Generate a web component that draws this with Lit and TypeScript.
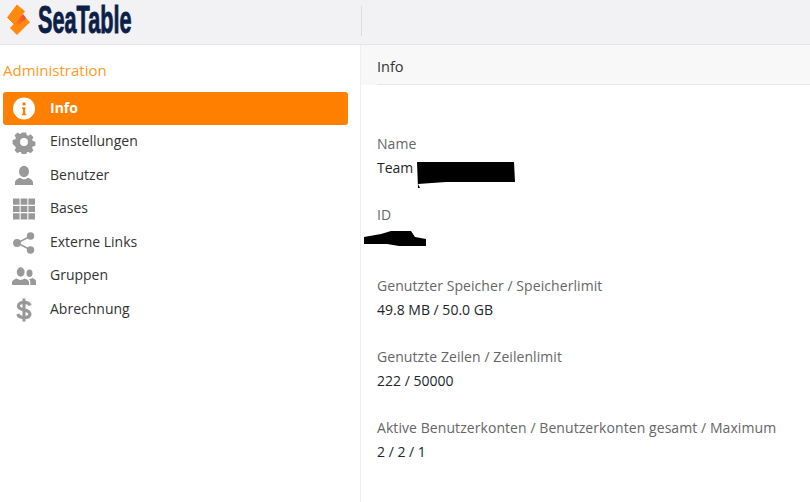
import { LitElement, html, css, svg } from "lit";
import { customElement } from "lit/decorators.js";

const icons: Record<string, unknown> = {
  info: svg`<svg width="24" height="24" viewBox="0 0 24 24"><circle cx="12" cy="11.500" r="11" fill="#fff"/><circle cx="12" cy="7" r="1.700" fill="#ff8000"/><path d="M10 10.300h3.200v6.400h1v1.500H9.900v-1.500h1v-4.900h-.9z" fill="#ff8000"/></svg>`,
  gear: svg`<svg width="24" height="24" viewBox="0 0 24 24"><path fill="#999" fill-rule="evenodd" d="M9.600 1h4.800l.7 3.100 1.700.7 2.700-1.700 3.400 3.400-1.700 2.700.7 1.700 3.100.7v4.800l-3.100.7-.7 1.700 1.700 2.700-3.400 3.400-2.700-1.700-1.700.7-.7 3.100H9.600l-.7-3.100-1.700-.7-2.700 1.700-3.400-3.400 1.700-2.700-.7-1.700L-1 14.400V9.600l3.100-.7.7-1.700-1.700-2.700 3.400-3.400 2.700 1.700 1.700-.7zM12 7.500a4.500 4.500 0 1 0 0 9 4.500 4.500 0 0 0 0-9z" transform="translate(1.500 1.500) scale(.875)"/></svg>`,
  user: svg`<svg width="24" height="24" viewBox="0 0 24 24"><ellipse cx="12" cy="7.500" rx="5" ry="5.800" fill="#999"/><path fill="#999" d="M3 21v-2.500c0-2.500 3.500-4.200 5.500-4.700 1 1 2.200 1.500 3.500 1.500s2.500-.5 3.500-1.500c2 .5 5.500 2.200 5.500 4.700V21z"/></svg>`,
  grid: svg`<svg width="24" height="24" viewBox="0 0 24 24"><path fill="#999" d="M1 1.500h6.600v6.200H1zM8.700 1.500h6.600v6.200H8.700zM16.400 1.500H23v6.200h-6.600zM1 8.900h6.600v6.200H1zM8.700 8.900h6.600v6.200H8.700zM16.400 8.900H23v6.200h-6.600zM1 16.300h6.600v6.200H1zM8.700 16.300h6.600v6.200H8.700zM16.400 16.300H23v6.200h-6.600z"/></svg>`,
  share: svg`<svg width="24" height="24" viewBox="0 0 24 24"><path d="M18 5.500 5 12l13 6.500" fill="none" stroke="#999" stroke-width="1.500"/><circle cx="18.500" cy="5" r="3.700" fill="#999"/><circle cx="5" cy="12" r="3.900" fill="#999"/><circle cx="18.500" cy="19" r="3.700" fill="#999"/></svg>`,
  group: svg`<svg width="24" height="24" viewBox="0 0 24 24"><ellipse cx="8.700" cy="8" rx="3.900" ry="4.700" fill="#999"/><ellipse cx="17.500" cy="9.300" rx="3" ry="3.700" fill="#999"/><path fill="#999" d="M0 21v-2.500c0-2 2.500-3.500 4.800-4 1 .9 2.400 1.400 3.900 1.400s2.900-.5 3.900-1.400c2.300.5 4.400 2 4.400 4V21z"/><path fill="#999" d="M18.300 21v-3c0-1.300-.7-2.400-1.600-3.200.3 0 .6.100.9.100 1 0 2-.3 2.600-.9 1.700.4 3.800 1.600 3.800 3.200V21z"/></svg>`,
  dollar: svg`<svg width="24" height="24" viewBox="0 0 24 24"><path fill="none" stroke="#999" stroke-width="3.300" d="M18 7.500c-.6-1.900-3-3.100-5.800-3.100-3.400 0-5.800 1.400-5.800 3.600 0 5 11.500 2.800 11.500 8 0 2.300-2.500 3.600-5.900 3.600-3.100 0-5.500-1.300-6.200-3.500"/><path fill="none" stroke="#999" stroke-width="3" d="M12 .5v23"/></svg>`,
};

const nav = [
  ["info", "Info"],
  ["gear", "Einstellungen"],
  ["user", "Benutzer"],
  ["grid", "Bases"],
  ["share", "Externe Links"],
  ["group", "Gruppen"],
  ["dollar", "Abrechnung"],
];

@customElement("app-root")
export class AppRoot extends LitElement {
  static styles = css`
    :host {
      display: block;
      width: 810px;
      height: 502px;
      overflow: hidden;
      background: #fff;
      font-family: "Open Sans", sans-serif;
      font-size: 14px;
      color: #212529;
    }
    .top {
      height: 44px;
      box-sizing: content-box;
      background: #f2f2f5;
      border-bottom: 1px solid #e4e4e6;
      display: flex;
    }
    .brand {
      width: 361px;
      flex: none;
      box-sizing: border-box;
      display: flex;
      align-items: flex-start;
      padding: 4px 0 0 6px;
      gap: 7px;
    }
    .wordmark {
      font-family: "Liberation Sans", sans-serif;
      font-weight: 700;
      font-size: 33px;
      line-height: 28px;
      margin-top: 3.6px;
      color: #0c1f47;
      display: inline-block;
      transform: scale(0.656, 1.186);
      transform-origin: 0 25.4px;
      white-space: nowrap;
      -webkit-text-stroke: 0.8px #0c1f47;
    }
    .divider {
      width: 1px;
      height: 30px;
      margin-top: 6px;
      background: #dcdcde;
    }
    .main {
      display: flex;
      height: 457px;
    }
    .side {
      width: 361px;
      flex: none;
      box-sizing: border-box;
      padding: 15px 12px 0 3px;
      border-right: 1px solid #eeeeee;
    }
    .side-title {
      color: #ff9a26;
      font-size: 15px;
      line-height: 21px;
      margin-bottom: 11px;
    }
    .item {
      display: flex;
      align-items: center;
      height: 33.5px;
      color: #333;
      font-size: 14px;
    }
    .item svg {
      display: block;
    }
    .ico {
      width: 24px;
      margin: 0 14px 0 9px;
      display: flex;
    }
    .txt {
      padding-bottom: 3px;
    }
    .on .txt {
      padding-bottom: 2px;
    }
    .item.on {
      height: 33px;
      margin-bottom: 0.5px;
      background: #ff8000;
      border-radius: 3px;
      color: #fff;
      font-weight: 700;
    }
    .content {
      flex: 1;
    }
    .head {
      height: 40px;
      background: #f8f8f8;
      box-sizing: border-box;
      padding-left: 16px;
    }
    .head div {
      height: 40px;
      box-sizing: border-box;
      border-bottom: 1px solid #e6e6e6;
      line-height: 44px;
      font-size: 14.5px;
      color: #333;
    }
    .body {
      padding: 49px 0 0 16px;
    }
    .field {
      height: 71px;
    }
    .label {
      color: #666;
      line-height: 20px;
      height: 24px;
      white-space: nowrap;
      letter-spacing: 0.07px;
    }
    .value {
      color: #212529;
      line-height: 20px;
      white-space: nowrap;
    }
    .redact-wrap {
      position: relative;
    }
    .blot {
      position: absolute;
      display: block;
    }
    .blot.a {
      left: 39px;
      top: 2px;
    }
    .blot.b {
      left: -14px;
      top: 1px;
    }
  `;

  render() {
    return html`
      <div class="top">
        <div class="brand">
          <svg width="25" height="32" viewBox="6 4 25 32">
            <defs>
              <linearGradient id="fold" x1="0" y1="1" x2="1" y2="0">
                <stop offset="0" stop-color="#ff8a0d" />
                <stop offset="1" stop-color="#f0403a" />
              </linearGradient>
            </defs>
            <path fill="#ff8a0d" stroke="#ff8a0d" stroke-linejoin="round" d="M17 5 24.500 11.500 14 24 7.500 17.500z" />
            <path fill="#ff8a0d" stroke="#ff8a0d" stroke-linejoin="round" d="M22 15.500 29.500 22 17 34.500 10.500 28z" />
            <path fill="url(#fold)" d="M15 23.500 23 14 26.500 18.500 16 27z" />
          </svg>
          <span class="wordmark">SeaTable</span>
        </div>
        <div class="divider"></div>
      </div>
      <div class="main">
        <div class="side">
          <div class="side-title">Administration</div>
          ${nav.map(
            ([i, t], n) => html`<div class="item ${n === 0 ? "on" : ""}">
              <span class="ico">${icons[i]}</span><span class="txt">${t}</span>
            </div>`
          )}
        </div>
        <div class="content">
          <div class="head"><div>Info</div></div>
          <div class="body">
            <div class="field">
              <div class="label">Name</div>
              <div class="value redact-wrap">
                Team
                <svg class="blot a" width="100" height="29" viewBox="0 0 100 29">
                  <path d="M1 2H98l1 20H30L2 24 4 28H2z" fill="#000" />
                </svg>
              </div>
            </div>
            <div class="field">
              <div class="label">ID</div>
              <div class="value redact-wrap">
                <svg class="blot b" width="64" height="20" viewBox="0 0 64 20">
                  <path d="M1 7 18 4 28 1 48 1 52 7 63 9V16H36L24 14 1 14z" fill="#000" />
                </svg>
              </div>
            </div>
            <div class="field">
              <div class="label">Genutzter Speicher / Speicherlimit</div>
              <div class="value">49.8 MB / 50.0 GB</div>
            </div>
            <div class="field">
              <div class="label">Genutzte Zeilen / Zeilenlimit</div>
              <div class="value">222 / 50000</div>
            </div>
            <div class="field">
              <div class="label">Aktive Benutzerkonten / Benutzerkonten gesamt / Maximum</div>
              <div class="value">2 / 2 / 1</div>
            </div>
          </div>
        </div>
      </div>
    `;
  }
}
